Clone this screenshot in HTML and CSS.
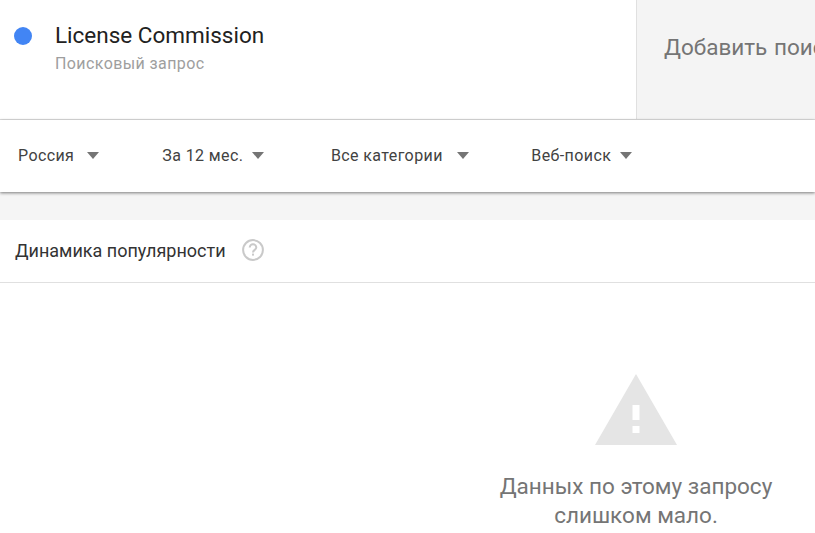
FILE: index.html
```html
<!DOCTYPE html>
<html lang="ru">
<head>
<meta charset="utf-8">
<title>Динамика популярности</title>
<link rel="stylesheet" href="styles.css">
</head>
<body>
<header class="terms">
  <div class="term">
    <span class="dot"></span>
    <div class="term-text">
      <div class="term-name">License Commission</div>
      <div class="term-type">Поисковый запрос</div>
    </div>
  </div>
  <div class="add-term">Добавить поисковый запрос</div>
</header>
<nav class="filters">
  <div class="filter f1"><span>Россия</span><i class="caret"></i></div>
  <div class="filter f2"><span>За 12 мес.</span><i class="caret"></i></div>
  <div class="filter f3"><span>Все категории</span><i class="caret"></i></div>
  <div class="filter f4"><span>Веб-поиск</span><i class="caret"></i></div>
</nav>
<main class="panel">
  <div class="panel-head">
    <h2 class="panel-title">Динамика популярности</h2>
    <svg class="help" width="24" height="24" viewBox="0 0 24 24" aria-hidden="true">
      <circle cx="12" cy="12" r="9.9" fill="none" stroke="#c9c9c9" stroke-width="2"/>
      <path d="M8.7 9.6a3.3 3.3 0 0 1 6.6 0c0 2.2-3.3 2.4-3.3 4.8" fill="none" stroke="#c9c9c9" stroke-width="2"/>
      <rect x="11" y="15.6" width="2" height="2" fill="#c9c9c9"/>
    </svg>
  </div>
  <div class="empty">
    <svg class="warn" width="82" height="71" viewBox="0 0 82 71" aria-hidden="true">
      <path fill-rule="evenodd" fill="#e5e5e5" d="M41 0 82 71H0ZM37.5 31v15h7V31ZM37.5 52v7h7v-7Z"/>
    </svg>
    <p class="empty-text">Данных по этому запросу<br>слишком мало.</p>
  </div>
</main>
</body>
</html>
```
FILE: styles.css
```css
* { box-sizing: border-box; }
html, body { margin: 0; height: 100%; overflow: hidden; }
body {
  width: 815px;
  height: 533px;
  background: linear-gradient(#fff 192px, #f5f5f5 192px, #f5f5f5 220px, #fff 220px);
  font-family: Roboto, "Noto Sans", sans-serif;
  color: #212121;
}
.terms {
  display: flex;
  height: 120px;
  border-bottom: 1px solid #e0e0e0;
}
.term {
  flex: 0 0 636px;
  display: flex;
  align-items: flex-start;
  padding: 22px 0 0 14px;
}
.dot {
  width: 18px;
  height: 18px;
  margin-top: 5px;
  border-radius: 50%;
  background: #4285f4;
}
.term-text { margin-top: -1px; margin-left: 23px; }
.term-name { font-size: 22.5px; line-height: 28px; color: #212121; }
.term-type { font-size: 16px; letter-spacing: .4px; line-height: 20px; margin-top: 5px; color: #9e9e9e; }
.add-term {
  flex: 1;
  min-width: 0;
  padding: 32px 0 0 27px;
  background: #f4f4f4;
  border-left: 1px solid #e0e0e0;
  font-size: 22.5px;
  word-spacing: 1px;
  line-height: 30px;
  color: #757575;
  white-space: nowrap;
  overflow: hidden;
}
.filters {
  position: relative;
  z-index: 1;
  display: flex;
  align-items: center;
  height: 72px;
  padding-bottom: 2px;
  background: #fff;
  box-shadow: 0 1px 3px rgba(0, 0, 0, .5);
}
.filter {
  display: flex;
  align-items: center;
  font-size: 16px;
  letter-spacing: .4px;
  color: #424242;
  white-space: nowrap;
}
.caret {
  width: 0;
  height: 0;
  margin-left: 13px;
  border-left: 6.5px solid transparent;
  border-right: 6.5px solid transparent;
  border-top: 7px solid #757575;
}
.f1 { margin-left: 18px; }
.f2 { margin-left: 63px; }
.f3 { margin-left: 66.5px; }
.f4 { margin-left: 62px; }
.f2 .caret { margin-left: 9px; }
.f3 .caret { margin-left: 14.5px; }
.f4 .caret { margin-left: 9px; }
.panel {
  margin-top: 28px;
  background: #fff;
}
.panel-head {
  display: flex;
  align-items: center;
  height: 63px;
  padding: 0 0 0 15px;
  border-bottom: 1px solid #e0e0e0;
}
.panel-title { margin: 0 0 2px; font-size: 18px; font-weight: 400; color: #333; }
.help { margin: 0 0 2px 15px; }
.empty {
  display: flex;
  flex-direction: column;
  align-items: center;
  width: 272px;
  margin-left: 500px;
  padding-top: 91px;
}
.warn { display: block; }
.empty-text {
  margin: 27px 0 0;
  text-align: center;
  font-size: 22.5px;
  line-height: 29px;
  color: #757575;
  white-space: nowrap;
}
```
